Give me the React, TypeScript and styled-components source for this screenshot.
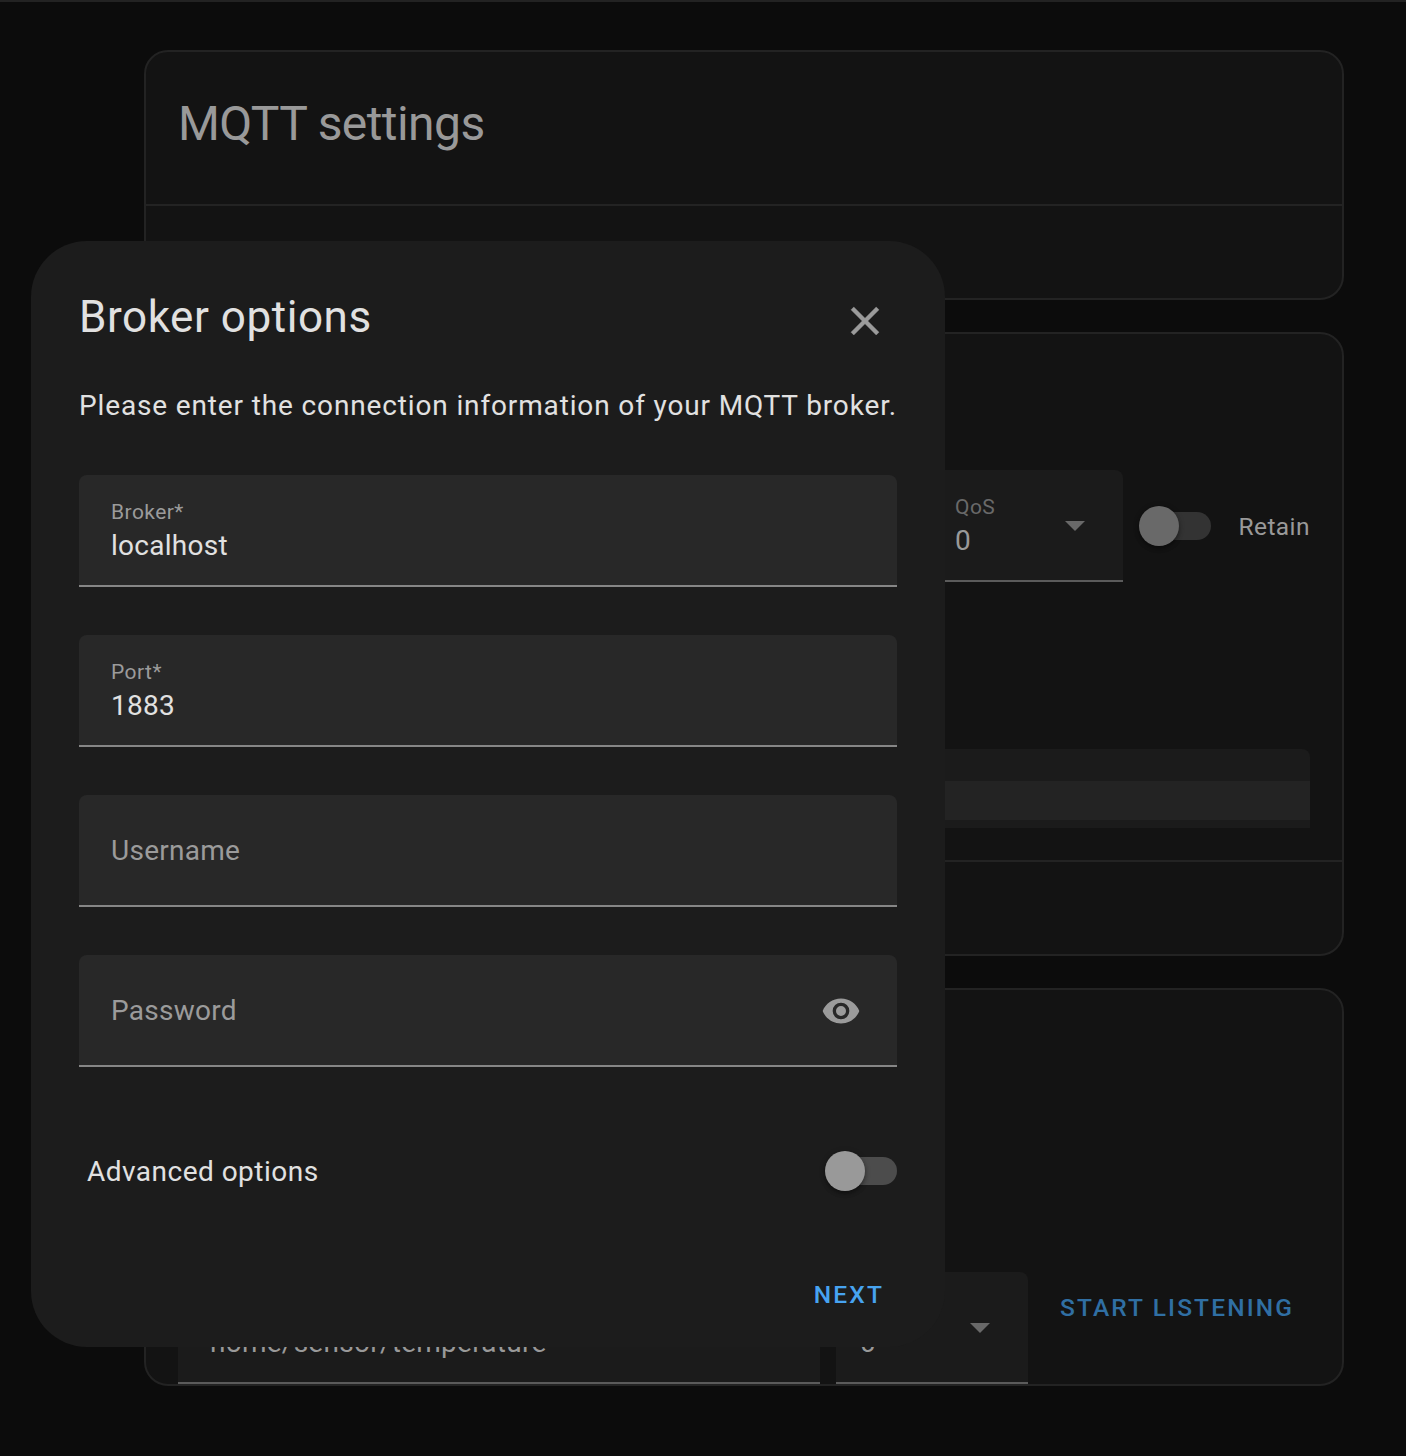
import React from "react";
import styled, { createGlobalStyle } from "styled-components";

const GlobalStyle = createGlobalStyle`
  *, *::before, *::after { box-sizing: border-box; }
  body {
    margin: 0;
    background: #0c0c0c;
    font-family: Roboto, "Noto Sans", sans-serif;
    -webkit-font-smoothing: antialiased;
  }
`;

const Page = styled.div`
  position: relative;
  height: 1456px;
  overflow: hidden;
  background: #0c0c0c;
  border-top: 2px solid #232323;
`;

const Content = styled.main`
  display: flex;
  flex-direction: column;
  gap: 32px;
  width: 1200px;
  margin: 48px 0 0 144px;
`;

const Card = styled.section<{ $height: number }>`
  display: flex;
  flex-direction: column;
  height: ${(p) => p.$height}px;
  background: #131313;
  border: 2px solid #232323;
  border-radius: 24px;
`;

const CardHeader = styled.h1`
  margin: 0;
  padding: 24px 32px 32px;
  color: #999;
  font-size: 48px;
  font-weight: 400;
  line-height: 96px;
  letter-spacing: -0.576px;
`;

const CardBody = styled.div`
  display: flex;
  flex: 1;
  flex-direction: column;
  justify-content: flex-end;
  padding: 0 32px 32px;
`;

const CardActions = styled.div`
  height: 94px;
  border-top: 2px solid #232323;
`;

const PublishRow = styled.div`
  display: flex;
  align-items: center;
  justify-content: flex-end;
  gap: 16px;
  margin-bottom: 167px;
`;

const ListenRow = styled.div`
  display: flex;
  align-items: flex-start;
  gap: 16px;
  margin-top: auto;
  padding-left: 32px;
`;

const FieldBox = styled.div<{ $dimmed?: boolean; $width?: number; $inset?: number }>`
  display: flex;
  flex: none;
  align-items: center;
  justify-content: space-between;
  width: ${(p) => (p.$width ? `${p.$width}px` : "100%")};
  height: 112px;
  padding: 2px 32px 0 ${(p) => p.$inset ?? 32}px;
  background: ${(p) => (p.$dimmed ? "#1b1b1b" : "#282828")};
  border-bottom: 2px solid ${(p) => (p.$dimmed ? "#5b5b5b" : "#868686")};
  border-radius: 8px 8px 0 0;
`;

const FieldText = styled.div`
  display: flex;
  flex-direction: column;
  padding-bottom: 3px;
`;

const FieldLabel = styled.span<{ $dimmed?: boolean }>`
  height: 32px;
  color: ${(p) => (p.$dimmed ? "#696969" : "#9b9b9b")};
  font-size: 21px;
  line-height: 31px;
  letter-spacing: 0.45px;
`;

const FieldValue = styled.span<{ $dimmed?: boolean }>`
  color: ${(p) => (p.$dimmed ? "#999" : "#e1e1e1")};
  font-size: 28px;
  line-height: 34px;
  letter-spacing: 0.2625px;
`;

const Placeholder = styled.span`
  color: #9b9b9b;
  font-size: 28px;
  line-height: 34px;
  letter-spacing: 0.2625px;
`;

const Arrow = styled.i`
  width: 0;
  height: 0;
  margin-right: 6px;
  border: 10px solid transparent;
  border-top-color: #696969;
  border-bottom: 0;
`;

const Switch = styled.span<{ $dimmed?: boolean }>`
  display: flex;
  align-items: center;
  flex: none;
  width: 72px;
  height: 40px;
  &::before {
    content: "";
    width: 40px;
    height: 40px;
    border-radius: 50%;
    background: ${(p) => (p.$dimmed ? "#696969" : "#999")};
    box-shadow: 0 3px 4px rgba(0, 0, 0, 0.3), 0 1px 6px rgba(0, 0, 0, 0.2);
    z-index: 1;
  }
  &::after {
    content: "";
    width: 52px;
    height: 28px;
    margin-left: -20px;
    border-radius: 0 14px 14px 0;
    background: ${(p) => (p.$dimmed ? "#333" : "#4c4c4c")};
  }
`;

const RetainLabel = styled.span`
  width: 83px;
  padding: 2px 0 0 11.5px;
  color: #999;
  font-size: 24.5px;
  line-height: 36px;
  letter-spacing: 0.42px;
`;

const Editor = styled.div`
  height: 79px;
  padding: 32px 0 8px;
  background: #1b1b1b;
  border-radius: 8px 8px 0 0;
`;

const ActiveLine = styled.div`
  height: 39px;
  background: #232323;
`;

const TextButton = styled.button<{ $dimmed?: boolean }>`
  padding: 0 16px;
  border: 0;
  background: none;
  color: ${(p) => (p.$dimmed ? "#306fa3" : "#47a3f0")};
  font: 500 24.5px/72px Roboto, "Noto Sans", sans-serif;
  letter-spacing: 2.13px;
  text-transform: uppercase;
  white-space: nowrap;
`;

const Dialog = styled.div`
  position: absolute;
  top: 239px;
  left: 31px;
  display: flex;
  flex-direction: column;
  width: 914px;
  height: 1106px;
  padding: 0 48px;
  background: #1c1c1c;
  border-radius: 56px;
`;

const DialogHeader = styled.header`
  display: flex;
  align-items: center;
  justify-content: space-between;
  height: 96px;
  margin-top: 32px;
  padding-right: 8px;
`;

const DialogTitle = styled.h2`
  margin: 0;
  padding-bottom: 8px;
  color: #e1e1e1;
  font-size: 44px;
  font-weight: 400;
  line-height: 56px;
  letter-spacing: 0.55px;
`;

const IconButton = styled.button`
  display: grid;
  place-items: center;
  width: 48px;
  height: 48px;
  padding: 0;
  border: 0;
  background: none;
  color: #9b9b9b;
`;

const Intro = styled.p`
  margin: 16px 0 48px;
  color: #e1e1e1;
  font-size: 28px;
  line-height: 42px;
  letter-spacing: 0.86px;
  white-space: nowrap;
`;

const Form = styled.div`
  display: flex;
  flex-direction: column;
  gap: 48px;
`;

const OptionRow = styled.label`
  display: flex;
  align-items: center;
  justify-content: space-between;
  height: 112px;
  padding-left: 8px;
  color: #e1e1e1;
  font-size: 28px;
  letter-spacing: 0.48px;
`;

const DialogActions = styled.footer`
  display: flex;
  justify-content: flex-end;
  margin: 32px -3px 0 0;
`;

interface GlyphProps {
  size: number;
  d: string;
  weight?: number;
}

function Glyph({ size, d, weight = 0 }: GlyphProps) {
  return (
    <svg
      width={size}
      height={size}
      viewBox="0 0 24 24"
      fill="currentColor"
      stroke="currentColor"
      strokeWidth={weight}
      strokeLinejoin="round"
      aria-hidden="true"
    >
      <path d={d} />
    </svg>
  );
}

const closePath =
  "M19,6.41L17.59,5L12,10.59L6.41,5L5,6.41L10.59,12L5,17.59L6.41,19L12,13.41L17.59,19L19,17.59L13.41,12L19,6.41Z";
const eyePath =
  "M12,9A3,3 0 0,0 9,12A3,3 0 0,0 12,15A3,3 0 0,0 15,12A3,3 0 0,0 12,9M12,17A5,5 0 0,1 7,12A5,5 0 0,1 12,7A5,5 0 0,1 17,12A5,5 0 0,1 12,17M12,4.5C7,4.5 2.73,7.61 1,12C2.73,16.39 7,19.5 12,19.5C17,19.5 21.27,16.39 23,12C21.27,7.61 17,4.5 12,4.5Z";

interface FieldProps {
  label?: string;
  value: string;
  dimmed?: boolean;
  width?: number;
  inset?: number;
  select?: boolean;
}

function Field({ label, value, dimmed, width, inset, select }: FieldProps) {
  return (
    <FieldBox $dimmed={dimmed} $width={width} $inset={inset}>
      <FieldText>
        <FieldLabel $dimmed={dimmed}>{label}</FieldLabel>
        <FieldValue $dimmed={dimmed}>{value}</FieldValue>
      </FieldText>
      {select && <Arrow />}
    </FieldBox>
  );
}

export default function App() {
  return (
    <>
      <GlobalStyle />
      <Page>
        <Content>
          <Card $height={250}>
            <CardHeader>MQTT settings</CardHeader>
            <CardActions />
          </Card>
          <Card $height={624}>
            <CardBody>
              <PublishRow>
                <Field label="QoS" value="0" dimmed select width={192} inset={24} />
                <Switch $dimmed />
                <RetainLabel>Retain</RetainLabel>
              </PublishRow>
              <Editor>
                <ActiveLine />
              </Editor>
            </CardBody>
            <CardActions />
          </Card>
          <Card $height={398}>
            <ListenRow>
              <Field value="home/sensor/temperature" dimmed width={642} />
              <Field value="0" dimmed select width={192} inset={24} />
              <TextButton $dimmed>Start listening</TextButton>
            </ListenRow>
          </Card>
        </Content>

        <Dialog role="dialog" aria-label="Broker options">
          <DialogHeader>
            <DialogTitle>Broker options</DialogTitle>
            <IconButton aria-label="Close">
              <Glyph size={48} d={closePath} weight={0.2} />
            </IconButton>
          </DialogHeader>
          <Intro>Please enter the connection information of your MQTT broker.</Intro>
          <Form>
            <Field label="Broker*" value="localhost" />
            <Field label="Port*" value="1883" />
            <FieldBox>
              <Placeholder>Username</Placeholder>
            </FieldBox>
            <FieldBox>
              <Placeholder>Password</Placeholder>
              <IconButton aria-label="Show password">
                <Glyph size={40} d={eyePath} />
              </IconButton>
            </FieldBox>
            <OptionRow>
              Advanced options
              <Switch />
            </OptionRow>
          </Form>
          <DialogActions>
            <TextButton>Next</TextButton>
          </DialogActions>
        </Dialog>
      </Page>
    </>
  );
}
